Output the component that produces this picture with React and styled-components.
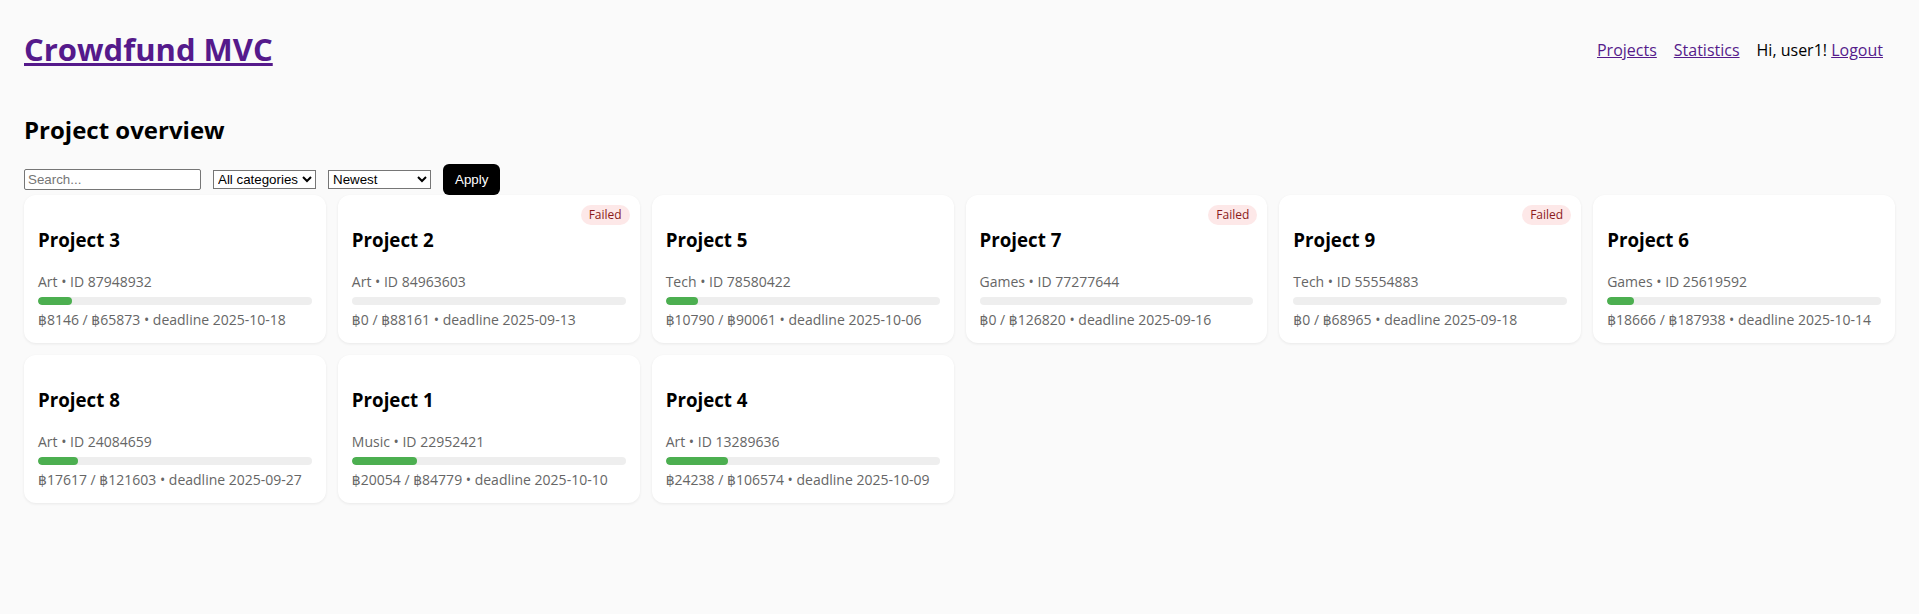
import styled, { createGlobalStyle } from "styled-components";

const projects = [
    { name: "Project 3", category: "Art", id: "87948932", raised: 8146, goal: 65873, deadline: "2025-10-18" },
    { name: "Project 2", category: "Art", id: "84963603", raised: 0, goal: 88161, deadline: "2025-09-13", failed: true },
    { name: "Project 5", category: "Tech", id: "78580422", raised: 10790, goal: 90061, deadline: "2025-10-06" },
    { name: "Project 7", category: "Games", id: "77277644", raised: 0, goal: 126820, deadline: "2025-09-16", failed: true },
    { name: "Project 9", category: "Tech", id: "55554883", raised: 0, goal: 68965, deadline: "2025-09-18", failed: true },
    { name: "Project 6", category: "Games", id: "25619592", raised: 18666, goal: 187938, deadline: "2025-10-14" },
    { name: "Project 8", category: "Art", id: "24084659", raised: 17617, goal: 121603, deadline: "2025-09-27" },
    { name: "Project 1", category: "Music", id: "22952421", raised: 20054, goal: 84779, deadline: "2025-10-10" },
    { name: "Project 4", category: "Art", id: "13289636", raised: 24238, goal: 106574, deadline: "2025-10-09" },
];

const GlobalStyle = createGlobalStyle`
    body {
        margin: 0;
        background: #fafafa;
        font-family: "Open Sans", "DejaVu Sans", sans-serif;
        color: #000;
    }
    a {
        color: #551a8b;
    }
`;

const App = () => {
    return (
        <>
            <GlobalStyle />
            <Page>
                <Header>
                    <Logo href="#">Crowdfund MVC</Logo>
                    <Nav>
                        <a href="#">Projects</a>
                        <a href="#">Statistics</a>
                        <span>Hi, user1! <a href="#">Logout</a></span>
                    </Nav>
                </Header>
                <Heading>Project overview</Heading>
                <Filters>
                    <SearchInput placeholder="Search..." />
                    <Select width="103px">
                        <option>All categories</option>
                    </Select>
                    <Select width="103px">
                        <option>Newest</option>
                    </Select>
                    <ApplyButton>Apply</ApplyButton>
                </Filters>
                <Grid>
                    {projects.map((p) => (
                        <Card key={p.id}>
                            {p.failed && <Badge>Failed</Badge>}
                            <Title>{p.name}</Title>
                            <Meta>{p.category} • ID {p.id}</Meta>
                            <Track>
                                <Fill style={{ width: `${Math.min(100, (p.raised / p.goal) * 100)}%` }} />
                            </Track>
                            <Meta>฿{p.raised} / ฿{p.goal} • deadline {p.deadline}</Meta>
                        </Card>
                    ))}
                </Grid>
            </Page>
        </>
    );
}

const Page = styled.div`
    padding: 28px 24px 24px;
`;

const Header = styled.header`
    display: flex;
    justify-content: space-between;
    align-items: center;
`;

const Logo = styled.a`
    font-size: 31px;
    line-height: 42px;
    font-weight: 700;
`;

const Nav = styled.nav`
    display: flex;
    gap: 17px;
    padding: 2px 12px 0 0;
    font-size: 16px;
`;

const Heading = styled.h2`
    font-size: 24px;
    line-height: 32px;
    font-weight: 700;
    margin: 44px 0 18px;
`;

const Filters = styled.form`
    display: flex;
    align-items: center;
    gap: 12px;
`;

const SearchInput = styled.input`
    box-sizing: border-box;
    width: 177px;
    height: 21px;
    padding: 1px 3px;
    border: 1px solid #767676;
    border-radius: 2px;
    font-family: "Liberation Sans", Arial, sans-serif;
    font-size: 13.33px;
    &::placeholder {
        color: #757575;
    }
`;

const Select = styled.select`
    box-sizing: border-box;
    width: ${(p) => p.width};
    height: 19px;
    border: 1px solid #767676;
    border-radius: 0;
    background: #fff;
    font-family: "Liberation Sans", Arial, sans-serif;
    font-size: 13.33px;
    color: #000;
`;

const ApplyButton = styled.button`
    height: 31px;
    padding: 0 12px;
    border: none;
    border-radius: 6px;
    background: #000;
    color: #fff;
    font-family: "Liberation Sans", Arial, sans-serif;
    font-size: 13.33px;
`;

const Grid = styled.div`
    display: grid;
    grid-template-columns: repeat(auto-fill, minmax(280px, 1fr));
    gap: 12px;
`;

const Card = styled.div`
    position: relative;
    padding: 14px;
    background: #fff;
    border-radius: 12px;
    box-shadow: 0 1px 3px rgba(0, 0, 0, 0.07);
`;

const Badge = styled.span`
    position: absolute;
    top: 10px;
    right: 10px;
    padding: 0 8px;
    height: 20px;
    line-height: 20px;
    border-radius: 999px;
    background: #fde8e8;
    color: #8b1a1a;
    font-size: 12px;
`;

const Title = styled.h3`
    font-size: 18.72px;
    line-height: 25px;
    font-weight: 700;
    margin: 18px 0 20px;
`;

const Meta = styled.div`
    font-size: 14px;
    line-height: 19px;
    color: #666;
`;

const Track = styled.div`
    height: 8px;
    margin: 6px 0 5px;
    border-radius: 4px;
    background: #eee;
    overflow: hidden;
`;

const Fill = styled.div`
    height: 100%;
    border-radius: 4px;
    background: #4caf50;
`;

export default App;
